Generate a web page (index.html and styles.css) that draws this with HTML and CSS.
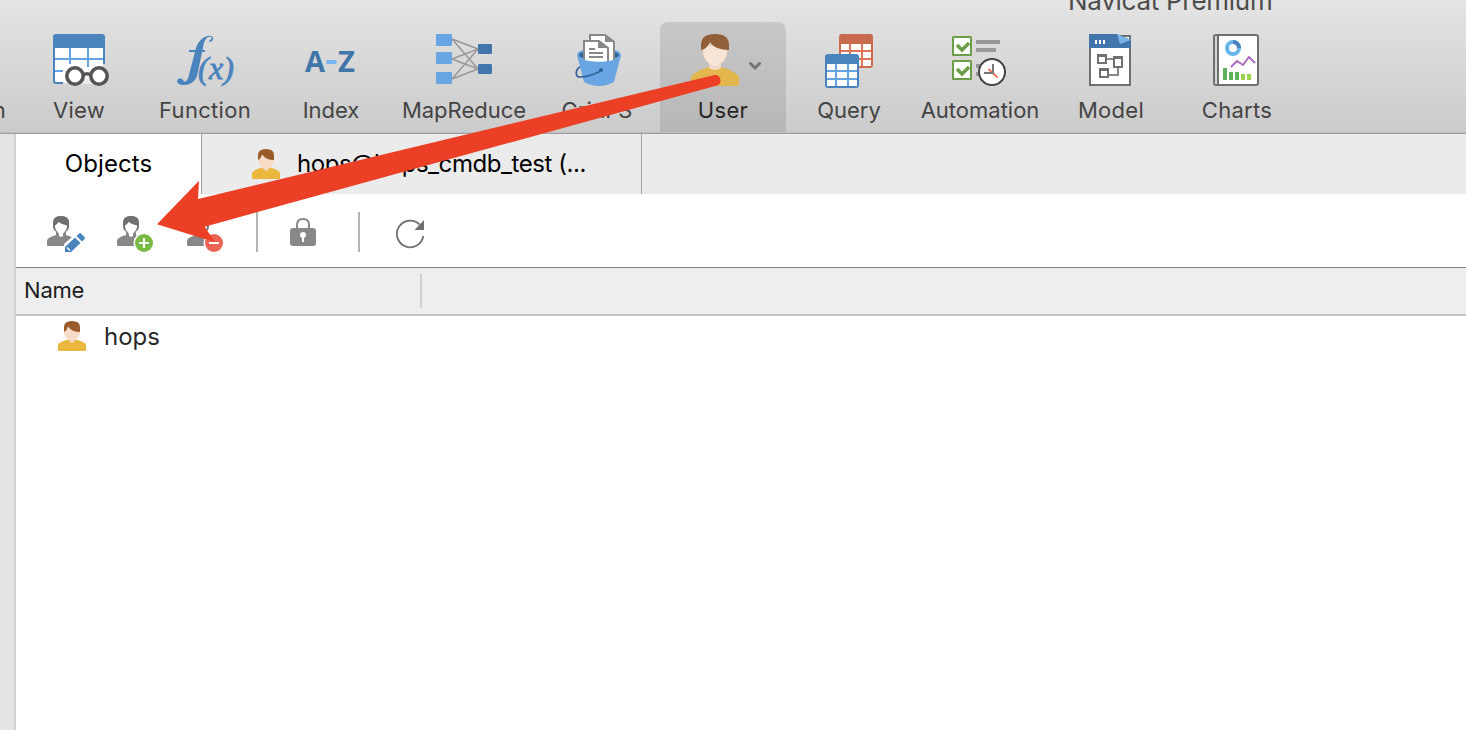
FILE: index.html
```
<!DOCTYPE html>
<html lang="en">
<head>
<meta charset="utf-8">
<title>Navicat Premium</title>
<link rel="stylesheet" href="styles.css">
</head>
<body>
<svg class="defs" aria-hidden="true">
  <symbol id="person" viewBox="0 0 28 30">
    <path d="M0 29v-5c0-2 5-4 10-5.500h8c5 1.500 10 3.500 10 5.500v5q0 1-1 1H1q-1 0-1-1z" fill="#ecb73e"/>
    <path d="M11.500 16h5v5q-2.500 1.500-5 0z" fill="#f3d3bb"/>
    <path d="M6 8c0-5 16-5 16 0v4c0 3-4.500 8-8 8s-8-5-8-8z" fill="#f8dcc7"/>
    <path d="M6 11V6q0-6 8-6t8 6v5q-8 0-12-5.500Q8.500 10 6 11z" fill="#995c2a"/>
  </symbol>
  <symbol id="gray-person" viewBox="0 0 28 30">
    <path d="M0 29v-5q2-3 9-5v-3q-3-3-3-7V7q0-7 8-7t8 7v2q0 4-3 7v3q7 2 9 5v5q0 1-1 1H1q-1 0-1-1z" fill="#888"/>
    <path d="M6 9V7q0-7 8-7t8 7v2q0 4-2 6V9q-5 0-8-3-2 3-4 3v6q-2-2-2-6z" fill="#707070"/>
    <path d="M8 9.500q2.500-1 3.500-3.500 4 3 8.500 3.500c0 4-2.500 6.500-4 8v2.500q-2 1.500-4 0v-2.500c-1.500-1.500-4-4-4-8z" fill="#fff"/>
  </symbol>
</svg>
<div class="window">
  <header class="toolbar">
    <div class="title">Navicat Premium</div>
    <div class="item clipped"><span class="label">n</span></div>
    <div class="item">
      <svg class="icon" viewBox="16 30 126 64">
        <path d="M53 37q0-3 3-3h46q3 0 3 3v27H53z" fill="#4a84bc"/>
        <path d="M55 48h48v35H55z" fill="#fff"/>
        <path d="M55 59h48M70 48v16M88 48v19M55 71h8" stroke="#65a4e2" stroke-width="2"/>
        <path d="M54 48v33q0 2 2 2h7M104 48v16" fill="none" stroke="#4a84bc" stroke-width="2"/>
        <path d="M84 79h8l4 5H80z" fill="#ececec"/>
        <path d="M103 64h3v20h-3z" fill="#d6d6d6"/>
        <g fill="#fff" stroke="#555" stroke-width="3.600"><circle cx="75" cy="76" r="8.200"/><circle cx="99" cy="76" r="8.200"/><path d="M83 75q4-2.500 8 0" fill="none"/></g>
      </svg>
      <span class="label">View</span>
    </div>
    <div class="item">
      <svg class="icon" viewBox="142 30 126 64">
        <path d="M212 38c-3-3-7 0-8.500 7l-6 29c-1.500 7-7 11-13 11-5 0-8-2-7.300-4.500.7-3 5-2.500 6-.5 1 3 4 2 5.500-4l7-27c2.500-10 12-15.500 16.500-12.500 2.500 2.500-.5 6.500-3.500 5z" fill="#4a84bc"/>
        <path d="M189 51h16" stroke="#4a84bc" stroke-width="2"/>
        <text x="198" y="79" class="fx" textLength="36">(x)</text>
      </svg>
      <span class="label">Function</span>
    </div>
    <div class="item">
      <svg class="icon" viewBox="267.500 30 126 64">
        <text x="304.500" y="72" class="az" textLength="20" lengthAdjust="spacingAndGlyphs">A</text>
        <path d="M326 60h10v4h-10z" fill="#78b5f0"/>
        <text x="337.500" y="72" class="az" textLength="17" lengthAdjust="spacingAndGlyphs">Z</text>
      </svg>
      <span class="label tight">Index</span>
    </div>
    <div class="item wide">
      <svg class="icon" viewBox="394 30 140 64">
        <path d="M452 39l26 10M452 39l26 30M452 59l26-10M452 59l26 10M452 79l26-30M452 79l26-10" stroke="#999" stroke-width="1.500"/>
        <g fill="#68a5e2"><rect x="436" y="34" width="16" height="12" rx="1.300"/><rect x="436" y="52" width="16" height="12" rx="1.300"/><rect x="436" y="72" width="16" height="12" rx="1.300"/></g>
        <g fill="#4176ab"><rect x="478" y="44" width="14" height="10" rx="1.300"/><rect x="478" y="64" width="14" height="10" rx="1.300"/></g>
      </svg>
      <span class="label tight">MapReduce</span>
    </div>
    <div class="item">
      <svg class="icon" viewBox="534 30 126 64">
        <ellipse cx="599" cy="55" rx="21" ry="6" fill="#2f6398" stroke="#68a5e2" stroke-width="2"/>
        <path d="M590 35h15l9 7v21h-24z" fill="#fff" stroke="#888" stroke-width="2"/>
        <path d="M605 34v8h10z" fill="#888"/>
        <path d="M584 41h15l9 7v16h-24z" fill="#fff" stroke="#888" stroke-width="2"/>
        <path d="M598 40v8h11z" fill="#888"/>
        <path d="M589 49h6M589 53h14M589 57h14" stroke="#888" stroke-width="2"/>
        <path d="M577 55c3 9 41 9 44 0l-7 27q-15 8-30 0z" fill="#68a5e2"/>
        <path d="M580 67c-5 3-5 10 0 10 6 0 15-3 21-6" fill="none" stroke="#2f6398" stroke-width="1.700"/><circle cx="601" cy="70" r="2" fill="#2f6398"/>
      </svg>
      <span class="label tight">GridFS</span>
    </div>
    <div class="item active">
      <svg class="icon" viewBox="660 30 126 64">
        <path d="M691 84v-7c2-4 9-7 17-10h14c8 3 15 6 17 10v7q0 2-2 2h-44q-2 0-2-2z" fill="#e3b64e"/>
        <path d="M709 62h12v6q-6 4-12 0z" fill="#f1ddce"/>
        <path d="M703 45h24v9c0 5-8 13-12 13s-12-8-12-13z" fill="#f7e5d7" stroke="#d4bcaa" stroke-width=".5"/>
        <path d="M701 50v-5q0-11 14-11t14 11v5q-14 0-19-8-3 7-9 8z" fill="#915f38"/>
        <path d="M750.500 63.500l4.500 4.500 4.500-4.500" fill="none" stroke="#737373" stroke-width="3" stroke-linecap="round"/>
      </svg>
      <span class="label">User</span>
    </div>
    <div class="item">
      <svg class="icon" viewBox="786 30 126 64">
        <rect x="839" y="34" width="34" height="34" rx="3" fill="#ca6a4d"/>
        <path d="M841 44h30v22h-30z" fill="#fff"/><path d="M850 44v22M862 44v22M841 51h30M841 59h30" stroke="#de7558" stroke-width="2"/>
        <rect x="825" y="54" width="34" height="34" rx="3" fill="#4a84bc"/>
        <path d="M827 64h30v22h-30z" fill="#fff"/><path d="M836 64v22M848 64v22M827 71h30M827 79h30" stroke="#65a4e2" stroke-width="2"/>
      </svg>
      <span class="label tight">Query</span>
    </div>
    <div class="item auto">
      <svg class="icon" viewBox="912 30 136 64">
        <g fill="#fff" stroke="#6c9d47" stroke-width="2"><rect x="953" y="37" width="18" height="18" rx=".5"/><rect x="953" y="61" width="18" height="18" rx=".5"/></g>
        <path d="M957 45l5 5 7-7M957 69l5 5 7-7" fill="none" stroke="#6c9d47" stroke-width="3.500"/>
        <path d="M976 42h24M976 50h20M976 66h8M976 74h8" stroke="#999" stroke-width="4"/>
        <circle cx="992" cy="72" r="13" fill="#fff" stroke="#444" stroke-width="2"/>
        <path d="M988.500 69l9 8.500" stroke="#f0755c" stroke-width="2"/><path d="M993 64v9h-9" fill="none" stroke="#777" stroke-width="2"/>
      </svg>
      <span class="label tight">Automation</span>
    </div>
    <div class="item">
      <svg class="icon" viewBox="1048 30 126 64">
        <path d="M1090 36h40v49h-40z" fill="#fff" stroke="#707070" stroke-width="2"/>
        <path d="M1089 34h28l14 6v8h-42z" fill="#4176ab"/><path d="M1117 34l14 6-11 4z" fill="#78b2e9"/>
        <path d="M1095 42h2M1099 42h2M1103 42h2" stroke="#fff" stroke-width="4"/>
        <path d="M1107 59h6M1109 75h9v-8" fill="none" stroke="#888" stroke-width="2"/>
        <g fill="none" stroke="#707070" stroke-width="2"><path d="M1098 55h8v8h-8zM1114 57h8v10h-8zM1100 69h8v8h-8z"/><path d="M1098 56h8M1114 58h8M1100 70h8"/></g>
      </svg>
      <span class="label">Model</span>
    </div>
    <div class="item">
      <svg class="icon" viewBox="1174 30 126 64">
        <rect x="1214" y="35" width="44" height="50" rx="2" fill="#fff" stroke="#707070" stroke-width="2"/>
        <path d="M1215 36h3v48h-3z" fill="#d5d5d5"/><path d="M1218 35v50" stroke="#707070" stroke-width="2"/>
        <circle cx="1233" cy="48" r="6" fill="none" stroke="#68b5ec" stroke-width="4"/><path d="M1233 42a6 6 0 0 1 6 6" fill="none" stroke="#4683bd" stroke-width="4"/>
        <path d="M1231 67l6-6 6 4 6-8 6 6" fill="none" stroke="#ad6cc2" stroke-width="2"/>
        <path d="M1223 68h4v12h-4zM1229 72h4v8h-4zM1235 72h4v8h-4z" fill="#5fb25b"/><path d="M1241 74h4v6h-4zM1247 74h4v6h-4z" fill="#9bd14d"/>
      </svg>
      <span class="label">Charts</span>
    </div>
  </header>
  <main class="content">
    <aside class="sidebar"></aside>
    <section class="pane">
      <nav class="tabs">
        <div class="tab selected">Objects</div>
        <div class="tab account"><svg class="person"><use href="#person"/></svg><span class="account-name">hops@hops_cmdb_test (...</span></div>
      </nav>
      <div class="actions">
        <svg class="action" viewBox="44 210 46 46"><use href="#gray-person" x="47" y="216" width="28" height="30"/><path d="M64 252v-8l15-13 8 8-14 13z" fill="#fff"/><path d="M65 252v-5l10-9.500 5.500 5.500-9.500 9zM76.500 236l2.500-2.500q1-1 2 0l3.500 3.500q1 1 0 2l-2.500 2.500z" fill="#4a84bc"/><path d="M67 247.500l3 3" stroke="#fff" stroke-width="1.300"/></svg>
        <svg class="action" viewBox="114 210 46 46"><use href="#gray-person" x="117" y="216" width="28" height="30"/><circle cx="144" cy="243" r="10.500" fill="#fff"/><circle cx="144" cy="243" r="9" fill="#78bc44"/><path d="M139 243h10M144 238v10" stroke="#fff" stroke-width="2"/></svg>
        <svg class="action" viewBox="184 210 46 46"><use href="#gray-person" x="187" y="216" width="28" height="30"/><circle cx="214" cy="243" r="10.500" fill="#fff"/></svg>
        <i class="divider"></i>
        <svg class="action lock" viewBox="284 210 46 46"><path d="M297 229v-4q0-6 6-6t6 6v4" fill="none" stroke="#888" stroke-width="2"/><rect x="290" y="228" width="26" height="18" rx="3" fill="#888"/><circle cx="303" cy="235" r="3" fill="#fff"/><path d="M303 235v7" stroke="#fff" stroke-width="2"/></svg>
        <i class="divider second"></i>
        <svg class="action refresh" viewBox="388 210 46 46"><path d="M419.500 224.500A13.300 13.300 0 1 0 423.300 236" fill="none" stroke="#707070" stroke-width="1.800"/><path d="M424 220v10h-9.500z" fill="#707070"/></svg>
      </div>
      <div class="columns"><div class="column">Name</div></div>
      <div class="row"><svg class="person"><use href="#person"/></svg><span class="row-name">hops</span></div>
    </section>
  </main>
  <svg class="arrow" viewBox="0 0 1466 730"><path d="M157 224.300L199 180.700 198 199 714.700 75A5.500 5.500 0 0 1 717 85.600L204.700 226.700 215 242.300z" fill="#ec4026"/><circle cx="214" cy="243" r="9" fill="#ea6354"/><path d="M204 238l11 4.300-5-8z" fill="#ec4026"/><path d="M209 243h10" stroke="#fff" stroke-width="2"/></svg>
</div>
</body>
</html>
```
FILE: styles.css
```
* { box-sizing: border-box; }
body { margin: 0; font-family: Inter, "Liberation Sans", sans-serif; overflow: hidden; }
svg { display: block; flex: none; }
.defs { display: none; }
.window { position: relative; width: 1466px; height: 730px; background: #fff; display: flex; flex-direction: column; overflow: hidden; }
.toolbar { position: relative; height: 134px; flex: none; display: flex; padding-top: 22px; background: linear-gradient(#e4e4e4, #cbcbcb); border-bottom: 1px solid #9f9f9f; box-shadow: inset 0 -1px #bdbdbd; }
.title { position: absolute; left: 1068px; top: -15px; font-size: 26px; line-height: 32px; letter-spacing: -0.28px; color: #4c4c4c; white-space: nowrap; }
.item { width: 126px; height: 110px; flex: none; display: flex; flex-direction: column; align-items: center; padding-top: 8px; color: #444; }
.item.wide { width: 140px; }
.item.auto { width: 136px; }
.item.clipped { width: 16px; padding: 72px 10px 0 0; align-items: flex-end; }
.item.active { background: linear-gradient(#c8c8c8, #b7b7b7); border-radius: 8px 8px 0 0; color: #282828; }
.icon { width: 100%; height: 64px; }
.label { font-size: 22px; line-height: 28px; margin-top: 2px; letter-spacing: 0.3px; }
.label.tight { letter-spacing: 0; }
.fx { font: italic 32px "Liberation Serif", serif; fill: #4a84bc; stroke: #4a84bc; stroke-width: 0.8px; }
.az { font: bold 29px "Open Sans", sans-serif; fill: #4176ab; }
.content { flex: 1; display: flex; }
.sidebar { width: 16px; background: #e4e4e4; border-right: 2px solid #d0d0d0; }
.pane { flex: 1; }
.tabs { height: 60px; display: flex; background: #ebebeb; }
.tab { height: 60px; display: flex; align-items: center; font-size: 24px; color: #000; border-right: 1px solid #a0a0a0; white-space: nowrap; }
.selected { width: 186px; justify-content: center; background: #fff; padding-bottom: 2px; letter-spacing: 0.1px; }
.account { width: 440px; padding-left: 50px; }
.person { width: 28px; height: 30px; }
.account-name { margin-left: 17px; padding-bottom: 2px; letter-spacing: -0.44px; }
.actions { height: 74px; display: flex; align-items: center; padding-left: 28px; gap: 24px; border-bottom: 1px solid #808080; }
.action { width: 46px; height: 46px; margin-top: 5px; }
.divider { width: 2px; height: 40px; background: #b5b5b5; margin: 2px 0 0 2px; }
.lock { margin-left: 2px; }
.second { margin-left: 4px; }
.refresh { margin-left: 4px; }
.columns { height: 48px; background: #eee; border-bottom: 2px solid #c3c3c3; padding: 6px 0; }
.column { width: 406px; height: 34px; border-right: 2px solid #d0d0d0; padding-left: 8px; font-size: 22px; line-height: 32px; letter-spacing: -0.2px; color: #1c1c1c; }
.row { height: 40px; display: flex; align-items: center; padding-left: 42px; font-size: 24px; color: #282828; }
.row-name { margin-left: 18px; }
.arrow { position: absolute; inset: 0; width: 1466px; height: 730px; }
```
